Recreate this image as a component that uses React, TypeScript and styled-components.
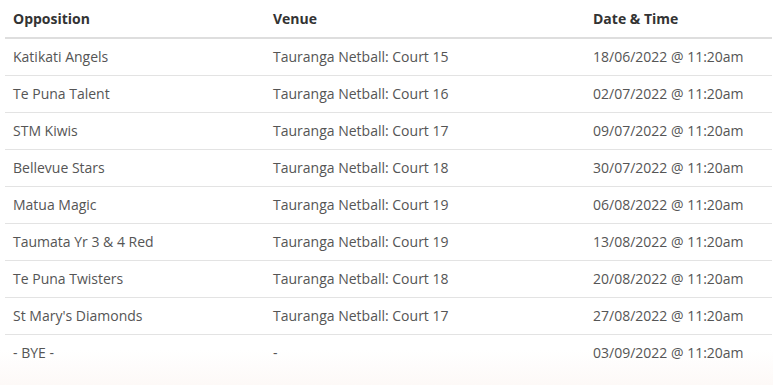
import React from 'react';
import styled, { createGlobalStyle } from 'styled-components';

const GlobalStyle = createGlobalStyle`
  html, body {
    margin: 0;
    padding: 0;
    background: #fff;
  }
  body {
    font-family: "Open Sans", "Liberation Sans", sans-serif;
    min-height: 385px;
    background: linear-gradient(to bottom, #fff 0, #fff 350px, #fdf9f7 385px);
  }
`;

const Wrapper = styled.div`
  padding: 0 1px 0 5px;
  overflow: hidden;
  height: 385px;
`;

const Table = styled.table`
  width: 767px;
  border-collapse: collapse;
  table-layout: fixed;
  font-size: 14px;
  line-height: 20px;
`;

const HeadCell = styled.th<{ $width: number }>`
  box-sizing: border-box;
  width: ${(p) => p.$width}px;
  text-align: left;
  font-weight: 700;
  color: #333;
  padding: 9px 8px 8px;
  border-bottom: 2px solid #dedede;
`;

const Row = styled.tr`
  &:last-child td {
    border-bottom: none;
  }
`;

const Cell = styled.td`
  color: #555;
  padding: 8px;
  border-bottom: 1px solid #e3e3e3;
  white-space: nowrap;
`;

const fixtures = [
  ['Katikati Angels', 'Tauranga Netball: Court 15', '18/06/2022 @ 11:20am'],
  ['Te Puna Talent', 'Tauranga Netball: Court 16', '02/07/2022 @ 11:20am'],
  ['STM Kiwis', 'Tauranga Netball: Court 17', '09/07/2022 @ 11:20am'],
  ['Bellevue Stars', 'Tauranga Netball: Court 18', '30/07/2022 @ 11:20am'],
  ['Matua Magic', 'Tauranga Netball: Court 19', '06/08/2022 @ 11:20am'],
  ['Taumata Yr 3 & 4 Red', 'Tauranga Netball: Court 19', '13/08/2022 @ 11:20am'],
  ['Te Puna Twisters', 'Tauranga Netball: Court 18', '20/08/2022 @ 11:20am'],
  ["St Mary's Diamonds", 'Tauranga Netball: Court 17', '27/08/2022 @ 11:20am'],
  ['- BYE -', '-', '03/09/2022 @ 11:20am'],
];

const App: React.FC = () => {
  return (
    <>
      <GlobalStyle />
      <Wrapper>
        <Table>
          <thead>
            <tr>
              <HeadCell $width={260}>Opposition</HeadCell>
              <HeadCell $width={320}>Venue</HeadCell>
              <HeadCell $width={187}>Date &amp; Time</HeadCell>
            </tr>
          </thead>
          <tbody>
            {fixtures.map(([team, venue, when]) => (
              <Row key={when}>
                <Cell>{team}</Cell>
                <Cell>{venue}</Cell>
                <Cell>{when}</Cell>
              </Row>
            ))}
          </tbody>
        </Table>
      </Wrapper>
    </>
  );
};

export default App;
